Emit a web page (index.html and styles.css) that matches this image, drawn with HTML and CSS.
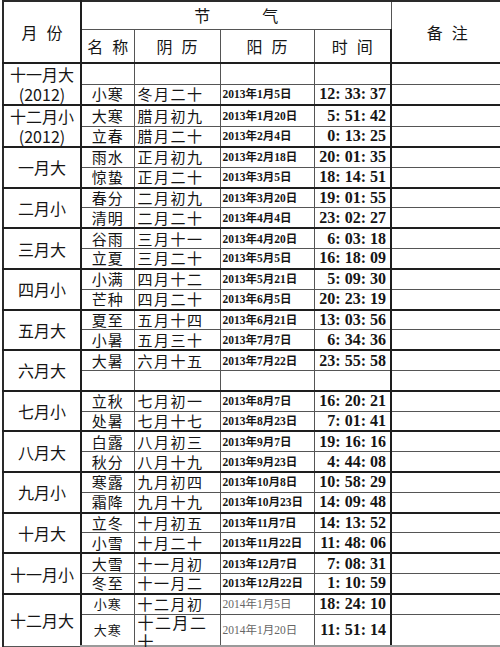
FILE: index.html
```html
<!DOCTYPE html>
<html lang="zh-CN">
<head>
<meta charset="utf-8">
<title>2013 节气表</title>
<link rel="stylesheet" href="styles.css">
</head>
<body>
<table class="sheet">
  <colgroup>
    <col class="w-month"><col class="w-name"><col class="w-lunar"><col class="w-solar"><col class="w-time"><col class="w-note">
  </colgroup>
  <thead>
    <tr class="h1">
      <td class="month head" rowspan="2"><span class="sp">月份</span></td>
      <td class="jieqi" colspan="4"><span class="sp-wide">节气</span></td>
      <td class="note head" rowspan="2"><span class="sp">备注</span></td>
    </tr>
    <tr class="h2">
      <td class="head"><span class="sp">名称</span></td>
      <td class="head"><span class="sp">阴历</span></td>
      <td class="head"><span class="sp">阳历</span></td>
      <td class="head time-h"><span class="sp">时间</span></td>
    </tr>
  </thead>
  <tbody>
    <tr class="r g first">
      <td class="month" rowspan="2">十一月大<br>(2012)</td>
      <td class="name"></td><td class="lunar"></td><td class="solar"></td><td class="time"></td><td class="note"></td>
    </tr>
    <tr class="r">
      <td class="name">小寒</td><td class="lunar">冬月二十</td><td class="solar">2013年1月5日</td><td class="time">12: 33: 37</td><td class="note"></td>
    </tr>

    <tr class="r g">
      <td class="month" rowspan="2">十二月小<br>(2012)</td>
      <td class="name">大寒</td><td class="lunar">腊月初九</td><td class="solar">2013年1月20日</td><td class="time">5: 51: 42</td><td class="note"></td>
    </tr>
    <tr class="r">
      <td class="name">立春</td><td class="lunar">腊月二十</td><td class="solar">2013年2月4日</td><td class="time">0: 13: 25</td><td class="note"></td>
    </tr>

    <tr class="r g">
      <td class="month" rowspan="2">一月大</td>
      <td class="name">雨水</td><td class="lunar">正月初九</td><td class="solar">2013年2月18日</td><td class="time">20: 01: 35</td><td class="note"></td>
    </tr>
    <tr class="r">
      <td class="name">惊蛰</td><td class="lunar">正月二十</td><td class="solar">2013年3月5日</td><td class="time">18: 14: 51</td><td class="note"></td>
    </tr>

    <tr class="r g">
      <td class="month" rowspan="2">二月小</td>
      <td class="name">春分</td><td class="lunar">二月初九</td><td class="solar">2013年3月20日</td><td class="time">19: 01: 55</td><td class="note"></td>
    </tr>
    <tr class="r">
      <td class="name">清明</td><td class="lunar">二月二十</td><td class="solar">2013年4月4日</td><td class="time">23: 02: 27</td><td class="note"></td>
    </tr>

    <tr class="r g">
      <td class="month" rowspan="2">三月大</td>
      <td class="name">谷雨</td><td class="lunar">三月十一</td><td class="solar">2013年4月20日</td><td class="time">6: 03: 18</td><td class="note"></td>
    </tr>
    <tr class="r">
      <td class="name">立夏</td><td class="lunar">三月二十</td><td class="solar">2013年5月5日</td><td class="time">16: 18: 09</td><td class="note"></td>
    </tr>

    <tr class="r g">
      <td class="month" rowspan="2">四月小</td>
      <td class="name">小满</td><td class="lunar">四月十二</td><td class="solar">2013年5月21日</td><td class="time">5: 09: 30</td><td class="note"></td>
    </tr>
    <tr class="r">
      <td class="name">芒种</td><td class="lunar">四月二十</td><td class="solar">2013年6月5日</td><td class="time">20: 23: 19</td><td class="note"></td>
    </tr>

    <tr class="r g">
      <td class="month" rowspan="2">五月大</td>
      <td class="name">夏至</td><td class="lunar">五月十四</td><td class="solar">2013年6月21日</td><td class="time">13: 03: 56</td><td class="note"></td>
    </tr>
    <tr class="r">
      <td class="name">小暑</td><td class="lunar">五月三十</td><td class="solar">2013年7月7日</td><td class="time">6: 34: 36</td><td class="note"></td>
    </tr>

    <tr class="r g">
      <td class="month" rowspan="2">六月大</td>
      <td class="name">大暑</td><td class="lunar">六月十五</td><td class="solar">2013年7月22日</td><td class="time">23: 55: 58</td><td class="note"></td>
    </tr>
    <tr class="r">
      <td class="name"></td><td class="lunar"></td><td class="solar"></td><td class="time"></td><td class="note"></td>
    </tr>

    <tr class="r g">
      <td class="month" rowspan="2">七月小</td>
      <td class="name">立秋</td><td class="lunar">七月初一</td><td class="solar">2013年8月7日</td><td class="time">16: 20: 21</td><td class="note"></td>
    </tr>
    <tr class="r">
      <td class="name">处暑</td><td class="lunar">七月十七</td><td class="solar">2013年8月23日</td><td class="time">7: 01: 41</td><td class="note"></td>
    </tr>

    <tr class="r g">
      <td class="month" rowspan="2">八月大</td>
      <td class="name">白露</td><td class="lunar">八月初三</td><td class="solar">2013年9月7日</td><td class="time">19: 16: 16</td><td class="note"></td>
    </tr>
    <tr class="r">
      <td class="name">秋分</td><td class="lunar">八月十九</td><td class="solar">2013年9月23日</td><td class="time">4: 44: 08</td><td class="note"></td>
    </tr>

    <tr class="r g">
      <td class="month" rowspan="2">九月小</td>
      <td class="name">寒露</td><td class="lunar">九月初四</td><td class="solar">2013年10月8日</td><td class="time">10: 58: 29</td><td class="note"></td>
    </tr>
    <tr class="r">
      <td class="name">霜降</td><td class="lunar">九月十九</td><td class="solar">2013年10月23日</td><td class="time">14: 09: 48</td><td class="note"></td>
    </tr>

    <tr class="r g">
      <td class="month" rowspan="2">十月大</td>
      <td class="name">立冬</td><td class="lunar">十月初五</td><td class="solar">2013年11月7日</td><td class="time">14: 13: 52</td><td class="note"></td>
    </tr>
    <tr class="r">
      <td class="name">小雪</td><td class="lunar">十月二十</td><td class="solar">2013年11月22日</td><td class="time">11: 48: 06</td><td class="note"></td>
    </tr>

    <tr class="r g">
      <td class="month" rowspan="2">十一月小</td>
      <td class="name">大雪</td><td class="lunar">十一月初</td><td class="solar">2013年12月7日</td><td class="time">7: 08: 31</td><td class="note"></td>
    </tr>
    <tr class="r">
      <td class="name">冬至</td><td class="lunar">十一月二</td><td class="solar">2013年12月22日</td><td class="time">1: 10: 59</td><td class="note"></td>
    </tr>

    <tr class="r g">
      <td class="month" rowspan="2">十二月大</td>
      <td class="name small">小寒</td><td class="lunar">十二月初</td><td class="solar light">2014年1月5日</td><td class="time">18: 24: 10</td><td class="note"></td>
    </tr>
    <tr class="r last">
      <td class="name small">大寒</td><td class="lunar"><div class="wrap">十二月二<br>十</div></td><td class="solar light">2014年1月20日</td><td class="time">11: 51: 14</td><td class="note"></td>
    </tr>
  </tbody>
</table>
</body>
</html>
```

FILE: styles.css
```css
html, body {
  margin: 0;
  padding: 0;
  background: #ffffff;
}
body {
  width: 500px;
  height: 647px;
  overflow: hidden;
}
.sheet {
  border-collapse: collapse;
  table-layout: fixed;
  width: 500px;
  margin: 0 0 0 2px;
  font-family: "Noto Sans CJK SC", sans-serif;
  color: #151515;
  border-top: 2px solid #2a2a2a;
  border-left: 2px solid #2a2a2a;
}
.w-month { width: 78px; }
.w-name { width: 53px; }
.w-lunar { width: 86px; }
.w-solar { width: 94px; }
.w-time { width: 77px; }
.w-note { width: 112px; }

.sheet td {
  border: 1px solid #555;
  padding: 0;
  white-space: nowrap;
  overflow: hidden;
  vertical-align: middle;
  line-height: 16px;
}
.h1 { height: 28px; }
.h2 { height: 34px; }
.r { height: 20.32px; }
.r.first { height: 21px; }
.r.last { height: 32px; }
.r.last td { border-bottom: 3px solid #9a9a9a; }

.r.g td { border-top: 2px solid #1e1e1e; }
.sheet td.month { border-right: 2px solid #1e1e1e; }
.sheet td.time, .sheet td.time-h { border-right: 2px solid #1e1e1e; }

.head {
  text-align: center;
  font-size: 16px;
}
.sp {
  letter-spacing: 9px;
  margin-right: -9px;
}
.jieqi {
  text-align: center;
  font-size: 16px;
}
.sp-wide {
  letter-spacing: 52px;
  margin-right: -52px;
}
.sheet td.month {
  text-align: center;
  font-size: 16px;
  line-height: 20px;
}
.name {
  text-align: center;
  font-size: 15px;
  letter-spacing: 1px;
}
.name.small {
  font-size: 13px;
}
.lunar {
  text-align: left;
  padding-left: 3px !important;
  font-size: 15px;
  letter-spacing: 1.5px;
}
.sheet .wrap {
  height: 29px;
  line-height: 19px;
  overflow: visible;
  white-space: nowrap;
  margin-top: -2px;
  font-size: 16px;
}
.r.last td.lunar { overflow: visible; vertical-align: top; }
.solar {
  text-align: left;
  padding-left: 2px !important;
  font-family: "Liberation Serif", "Noto Sans CJK SC", serif;
  font-weight: bold;
  font-size: 11.5px;
}
.solar.light {
  font-weight: normal;
  color: #666;
}
.time {
  text-align: right;
  padding-right: 4px !important;
  font-family: "Liberation Serif", serif;
  font-weight: bold;
  font-size: 16px;
}
```
